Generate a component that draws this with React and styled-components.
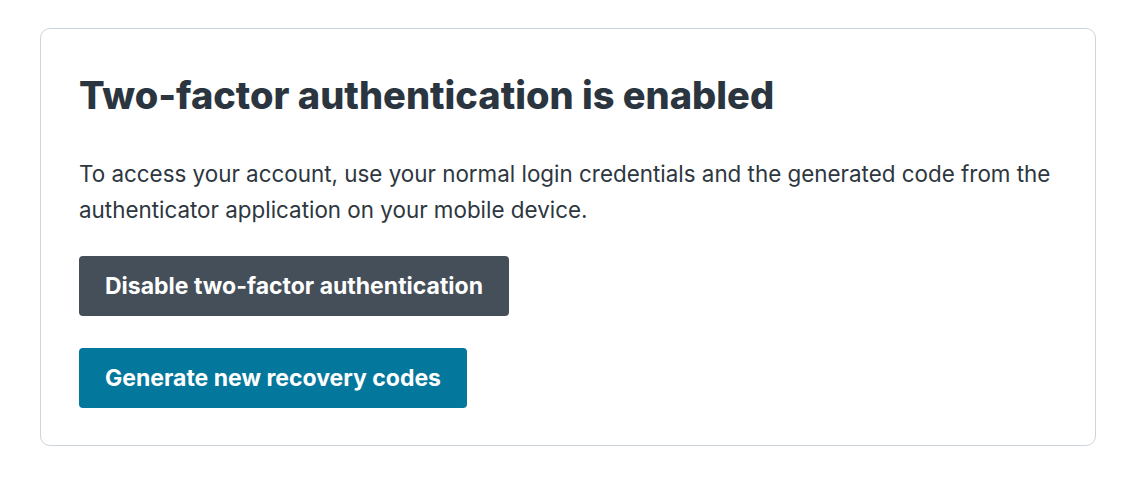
import React from 'react';
import styled, {createGlobalStyle} from 'styled-components';

const GlobalStyle = createGlobalStyle`
  body {
    margin: 0;
    background: #ffffff;
    font-family: Inter, "Noto Sans", sans-serif;
    -webkit-font-smoothing: antialiased;
  }
`;

const Page = styled.div`
  padding: 28px 36px 37px 40px;
`;

const Card = styled.section`
  border: 1px solid #cdd5dc;
  border-radius: 10px;
  padding: 43px 39px 37px 38px;
  display: flex;
  flex-direction: column;
  align-items: flex-start;
`;

const Heading = styled.h2`
  margin: 0 0 38px;
  font-size: 38px;
  line-height: 46px;
  font-weight: 800;
  color: #2b3540;
  letter-spacing: 0;
`;

const Text = styled.p`
  margin: 0 0 28px;
  font-size: 22.4px;
  line-height: 36px;
  color: #2e3740;
`;

const Button = styled.button`
  height: 60px;
  padding: 0 26px;
  border: 0;
  border-radius: 4px;
  font-family: inherit;
  font-size: 23px;
  font-weight: 700;
  color: #ffffff;
  background: ${p => (p.$variant === 'primary' ? '#04779c' : '#454f59')};
  margin-bottom: 32px;
  cursor: pointer;

  &:last-child {
    margin-bottom: 0;
  }
`;

export default function App() {
  return (
    <Page>
      <GlobalStyle />
      <Card>
        <Heading>Two-factor authentication is enabled</Heading>
        <Text>
          To access your account, use your normal login credentials and the generated code from the
          authenticator application on your mobile device.
        </Text>
        <Button>Disable two-factor authentication</Button>
        <Button $variant="primary">Generate new recovery codes</Button>
      </Card>
    </Page>
  );
}
